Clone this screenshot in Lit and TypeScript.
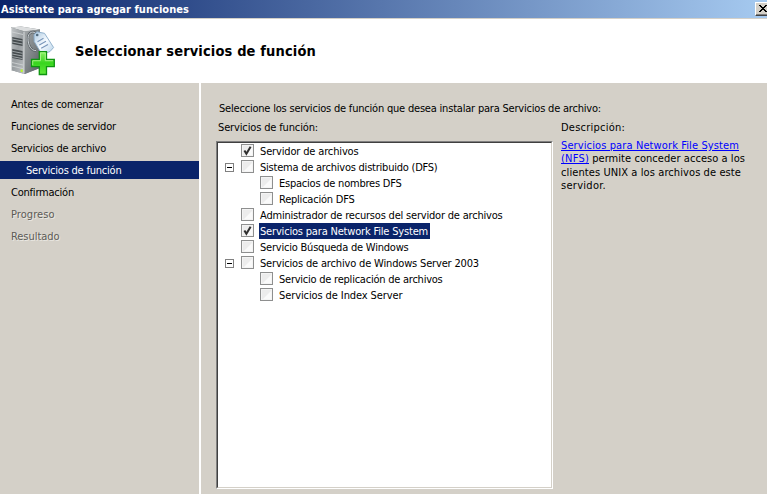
import { LitElement, html, css, svg, nothing } from "lit";
import { customElement, property, state } from "lit/decorators.js";

/** A single line of text, tracked so that it takes up exactly `width` pixels. */
@customElement("fit-text")
class FitText extends LitElement {
  @property({ type: Number }) width = 0;
  @property() text = "";
  @state() private spacing = 0;

  static styles = css`
    :host { display: inline-block; white-space: pre; }
  `;

  firstUpdated() {
    const span = this.renderRoot.querySelector("span")!;
    const natural = span.getBoundingClientRect().width;
    this.spacing = (this.width - natural) / this.text.length;
  }

  render() {
    return html`<span style="letter-spacing:${this.spacing}px">${this.text}</span>`;
  }
}

interface Step { label: string; width: number; kind?: "active" | "disabled"; }
interface Role { label: string; width: number; checked?: boolean; open?: boolean; child?: boolean; selected?: boolean; }

const steps: Step[] = [
  { label: "Antes de comenzar", width: 92 },
  { label: "Funciones de servidor", width: 105 },
  { label: "Servicios de archivo", width: 95 },
  { label: "Servicios de función", width: 95.5, kind: "active" },
  { label: "Confirmación", width: 63 },
  { label: "Progreso", width: 43.5, kind: "disabled" },
  { label: "Resultado", width: 48.5, kind: "disabled" },
];

const roles: Role[] = [
  { label: "Servidor de archivos", width: 98.5, checked: true },
  { label: "Sistema de archivos distribuido (DFS)", width: 177.5, open: true },
  { label: "Espacios de nombres DFS", width: 122.5, child: true },
  { label: "Replicación DFS", width: 75.5, child: true },
  { label: "Administrador de recursos del servidor de archivos", width: 242.5 },
  { label: "Servicios para Network File System", width: 168, checked: true, selected: true },
  { label: "Servicio Búsqueda de Windows", width: 148.5 },
  { label: "Servicios de archivo de Windows Server 2003", width: 219, open: true },
  { label: "Servicio de replicación de archivos", width: 163.5, child: true },
  { label: "Servicios de Index Server", width: 123.5, child: true },
];

@customElement("app-root")
class AppRoot extends LitElement {
  static styles = css`
    :host {
      display: flex; flex-direction: column; width: 767px; height: 494px; overflow: hidden;
      background: #d4d0c8; color: #000;
      font: 11px/18px "DejaVu Sans Condensed", "DejaVu Sans", sans-serif;
      font-stretch: condensed;
    }
    * { box-sizing: border-box; }
    .titlebar {
      height: 19px; flex: none; display: flex; justify-content: space-between;
      background: linear-gradient(90deg, #0a246a, #a6caf0); border-bottom: 1px solid #d4d0c8;
      color: #fff; font-weight: bold; line-height: 20px; padding-left: 1px; overflow: hidden;
    }
    .close {
      width: 12px; height: 14px; margin-top: 2px; flex: none; background: #d4d0c8;
      border: 1px solid #fff; border-right: 0; border-bottom-color: #404040;
      box-shadow: inset 0 -1px #808080; overflow: hidden;
    }
    .close svg { display: block; margin: 2px 0 0 3px; }
    .header { height: 64px; flex: none; display: flex; align-items: center; background: #fff; }
    .header > svg { width: 64px; height: 64px; flex: none; }
    .header h1 { margin: 0 0 0 11px; font-size: 14.5px; line-height: 20px; }
    .body { flex: 1; display: flex; min-height: 0; }
    .steps { width: 201px; flex: none; border-right: 2px solid #fff; padding-top: 12px; }
    .step { height: 18px; line-height: 20px; margin-bottom: 4px; padding-left: 11px; }
    .active { background: #0a246a; color: #fff; padding-left: 26px; }
    .disabled { color: #5d5b56; text-shadow: 1px 1px #eae8e3; }
    .main { padding: 17px 0 0 15px; flex: 1; }
    .intro { height: 19px; padding-left: 3px; }
    .columns { display: flex; gap: 8px; }
    .label { height: 22px; padding-left: 2px; }
    .tree {
      width: 337px; height: 348px; background: #fff; border: 1px solid; border-color: #808080 #fff #fff #808080;
    }
    .well { height: 100%; border: 1px solid; border-color: #404040 #d4d0c8 #d4d0c8 #404040; }
    .row { display: flex; align-items: center; height: 16px; padding-left: 7px; }
    .row.child { padding-left: 26px; }
    .slot { width: 16px; height: 16px; flex: none; }
    .slot svg, .box svg { display: block; }
    .slot svg { margin-top: 4px; }
    .box { width: 13px; height: 13px; margin: -1px 5px 0 0; }
    .name { height: 16px; padding: 0 1px; }
    .name.selected { background: #0a246a; color: #fff; padding-right: 2px; }
    .desc p { margin: 0; line-height: 13.3px; display: flex; flex-direction: column; }
    .desc .label { height: 20px; padding: 0; }
    .link { color: #0000ff; text-decoration: underline; }
    .mixed { display: flex; }
  `;

  private line(text: string, width: number, cls = "") {
    return html`<fit-text class=${cls} .text=${text} .width=${width}></fit-text>`;
  }

  private expander() {
    return svg`<svg width="9" height="9" shape-rendering="crispEdges">
      <rect x=".5" y=".5" width="8" height="8" fill="#fff" stroke="#808080"/>
      <path d="M2 4.5h5" stroke="#000"/></svg>`;
  }

  private checkbox(checked = false) {
    return svg`<svg width="13" height="13">
      <rect x=".5" y=".5" width="12" height="12" fill="#f4f4f4" stroke="#8e8f8f"/>
      <rect x="1.5" y="1.5" width="10" height="10" fill="#ececec" stroke="#f4f4f4"/>
      <path d="M11 3v8H3z" fill="#fafafa"/>
      ${checked ? svg`<path d="M3.4 6.4 5.4 9.8 9.6 2.7" fill="none" stroke="#303030" stroke-width="2"/>` : nothing}
    </svg>`;
  }

  private serverIcon() {
    return svg`<svg viewBox="0 0 64 64">
      <defs>
        <linearGradient id="front" x1="0" x2="1" y2="1"><stop stop-color="#c4c7c9"/><stop offset=".5" stop-color="#989da0"/><stop offset="1" stop-color="#bcc0c2"/></linearGradient>
        <linearGradient id="side" x2="1" y2="1"><stop stop-color="#a3a7a9"/><stop offset=".55" stop-color="#7b8184"/><stop offset="1" stop-color="#565c60"/></linearGradient>
        <linearGradient id="tag" x2="1" y2="1"><stop stop-color="#a9c6df"/><stop offset=".5" stop-color="#f6fbff"/><stop offset="1" stop-color="#b4d0e7"/></linearGradient>
        <linearGradient id="plus" x2="0" y2="1"><stop stop-color="#8cf065"/><stop offset=".5" stop-color="#38d51e"/><stop offset="1" stop-color="#62e93a"/></linearGradient>
      </defs>
      <path d="M11 8.6 21 7.5 40 10.5 40 49 25 55 11 51z" fill="#777e81"/>
      <path d="M11 8.6 21 7.5 40 10.5 25 12.5z" fill="#dcdedf"/>
      <path d="M11 8.6 24 12.3V55L11 51z" fill="url(#front)"/>
      <path d="M24 12.3 40 10.5V49L24 55z" fill="url(#side)"/>
      <path d="M11.5 9V51M24 12.8V54.5" stroke="#dde0e1" stroke-width=".9" fill="none"/>
      <path d="M12.3 18 22.5 20v7L12.3 25zM12.3 30 22.5 32v9L12.3 39z" fill="#454b4e"/>
      <path d="M12.3 20 22.5 22M12.3 23 22.5 25M12.3 32.3 22.5 34.3M12.3 35 22.5 37M12.3 37.6 22.5 39.6" stroke="#b4babd" stroke-width=".8"/>
      <path d="M12 13 23 15.5M12 43.5 23 46M12 47 23 49.7" stroke="#d2d5d7" stroke-width=".8"/>
      <path d="M21.7 50.5v2.4" stroke="#b9ff20" stroke-width="2"/>
      <path d="M36.5 15.5C34 11 28 13 28 19.5s3 12.5 8 12" fill="none" stroke="#5a6165" stroke-width="2.2"/>
      <path d="M36.5 15.5C34 11 28 13 28 19.5s3 12.5 8 12" fill="none" stroke="#cfd5d9"/>
      <path d="M34 15.5 37 12.8 44.5 14.3 53.6 28.5 50 32.5 42 35.5 34.2 22.5z" fill="url(#tag)" stroke="#8aacc8" stroke-width=".9" stroke-linejoin="round"/>
      <circle cx="37.2" cy="16" r="1.3" fill="#50697c"/>
      <path d="M37.5 22.8 43.5 19.3M39.3 26 46 22.3M41.2 29.2 48 25.5" stroke="#7996ba" stroke-width="1.1"/>
      <path d="M39.3 32.7h7.2v7.8h7.8v7.2h-7.8v7.8h-7.2v-7.8h-7.8v-7.2h7.8z" fill="url(#plus)" stroke="#0f9410" stroke-width="1.3"/>
      <path d="M40.5 41.7V33.9h4.8v7.8h7.8M32.7 46.2v-4.5h7.8" fill="none" stroke="#a9f788" stroke-width=".9"/>
    </svg>`;
  }

  render() {
    return html`
      <div class="titlebar">
        ${this.line("Asistente para agregar funciones", 188)}
        <div class="close"><svg width="8" height="8" shape-rendering="crispEdges"><path d="M0 0h2v1h1v1h2v-1h1v-1h2v1h-1v1h-1v1h-1v1h1v1h1v1h1v1h-2v-1h-1v-1h-2v1h-1v1h-2v-1h1v-1h1v-1h1v-1h-1v-1h-1v-1h-1z"/></svg></div>
      </div>
      <div class="header">${this.serverIcon()}<h1>${this.line("Seleccionar servicios de función", 241)}</h1></div>
      <div class="body">
        <div class="steps">
          ${steps.map((s) => html`<div class="step ${s.kind ?? ""}">${this.line(s.label, s.width)}</div>`)}
        </div>
        <div class="main">
          <div class="intro">${this.line("Seleccione los servicios de función que desea instalar para Servicios de archivo:", 382)}</div>
          <div class="columns">
            <div>
              <div class="label">${this.line("Servicios de función:", 100)}</div>
              <div class="tree"><div class="well">
                ${roles.map((r) => html`<div class="row ${r.child ? "child" : ""}">
                  <div class="slot">${r.open ? this.expander() : nothing}</div>
                  <div class="box">${this.checkbox(r.checked)}</div>
                  <div class="name ${r.selected ? "selected" : ""}">${this.line(r.label, r.width)}</div>
                </div>`)}
              </div></div>
            </div>
            <div class="desc">
              <div class="label">${this.line("Descripción:", 64)}</div>
              <p>
                ${this.line("Servicios para Network File System", 178, "link")}
                <span class="mixed">${this.line("(NFS)", 28, "link")}${this.line(" permite conceder acceso a los", 156)}</span>
                ${this.line("clientes UNIX a los archivos de este", 180)}
                ${this.line("servidor.", 45)}
              </p>
            </div>
          </div>
        </div>
      </div>`;
  }
}
